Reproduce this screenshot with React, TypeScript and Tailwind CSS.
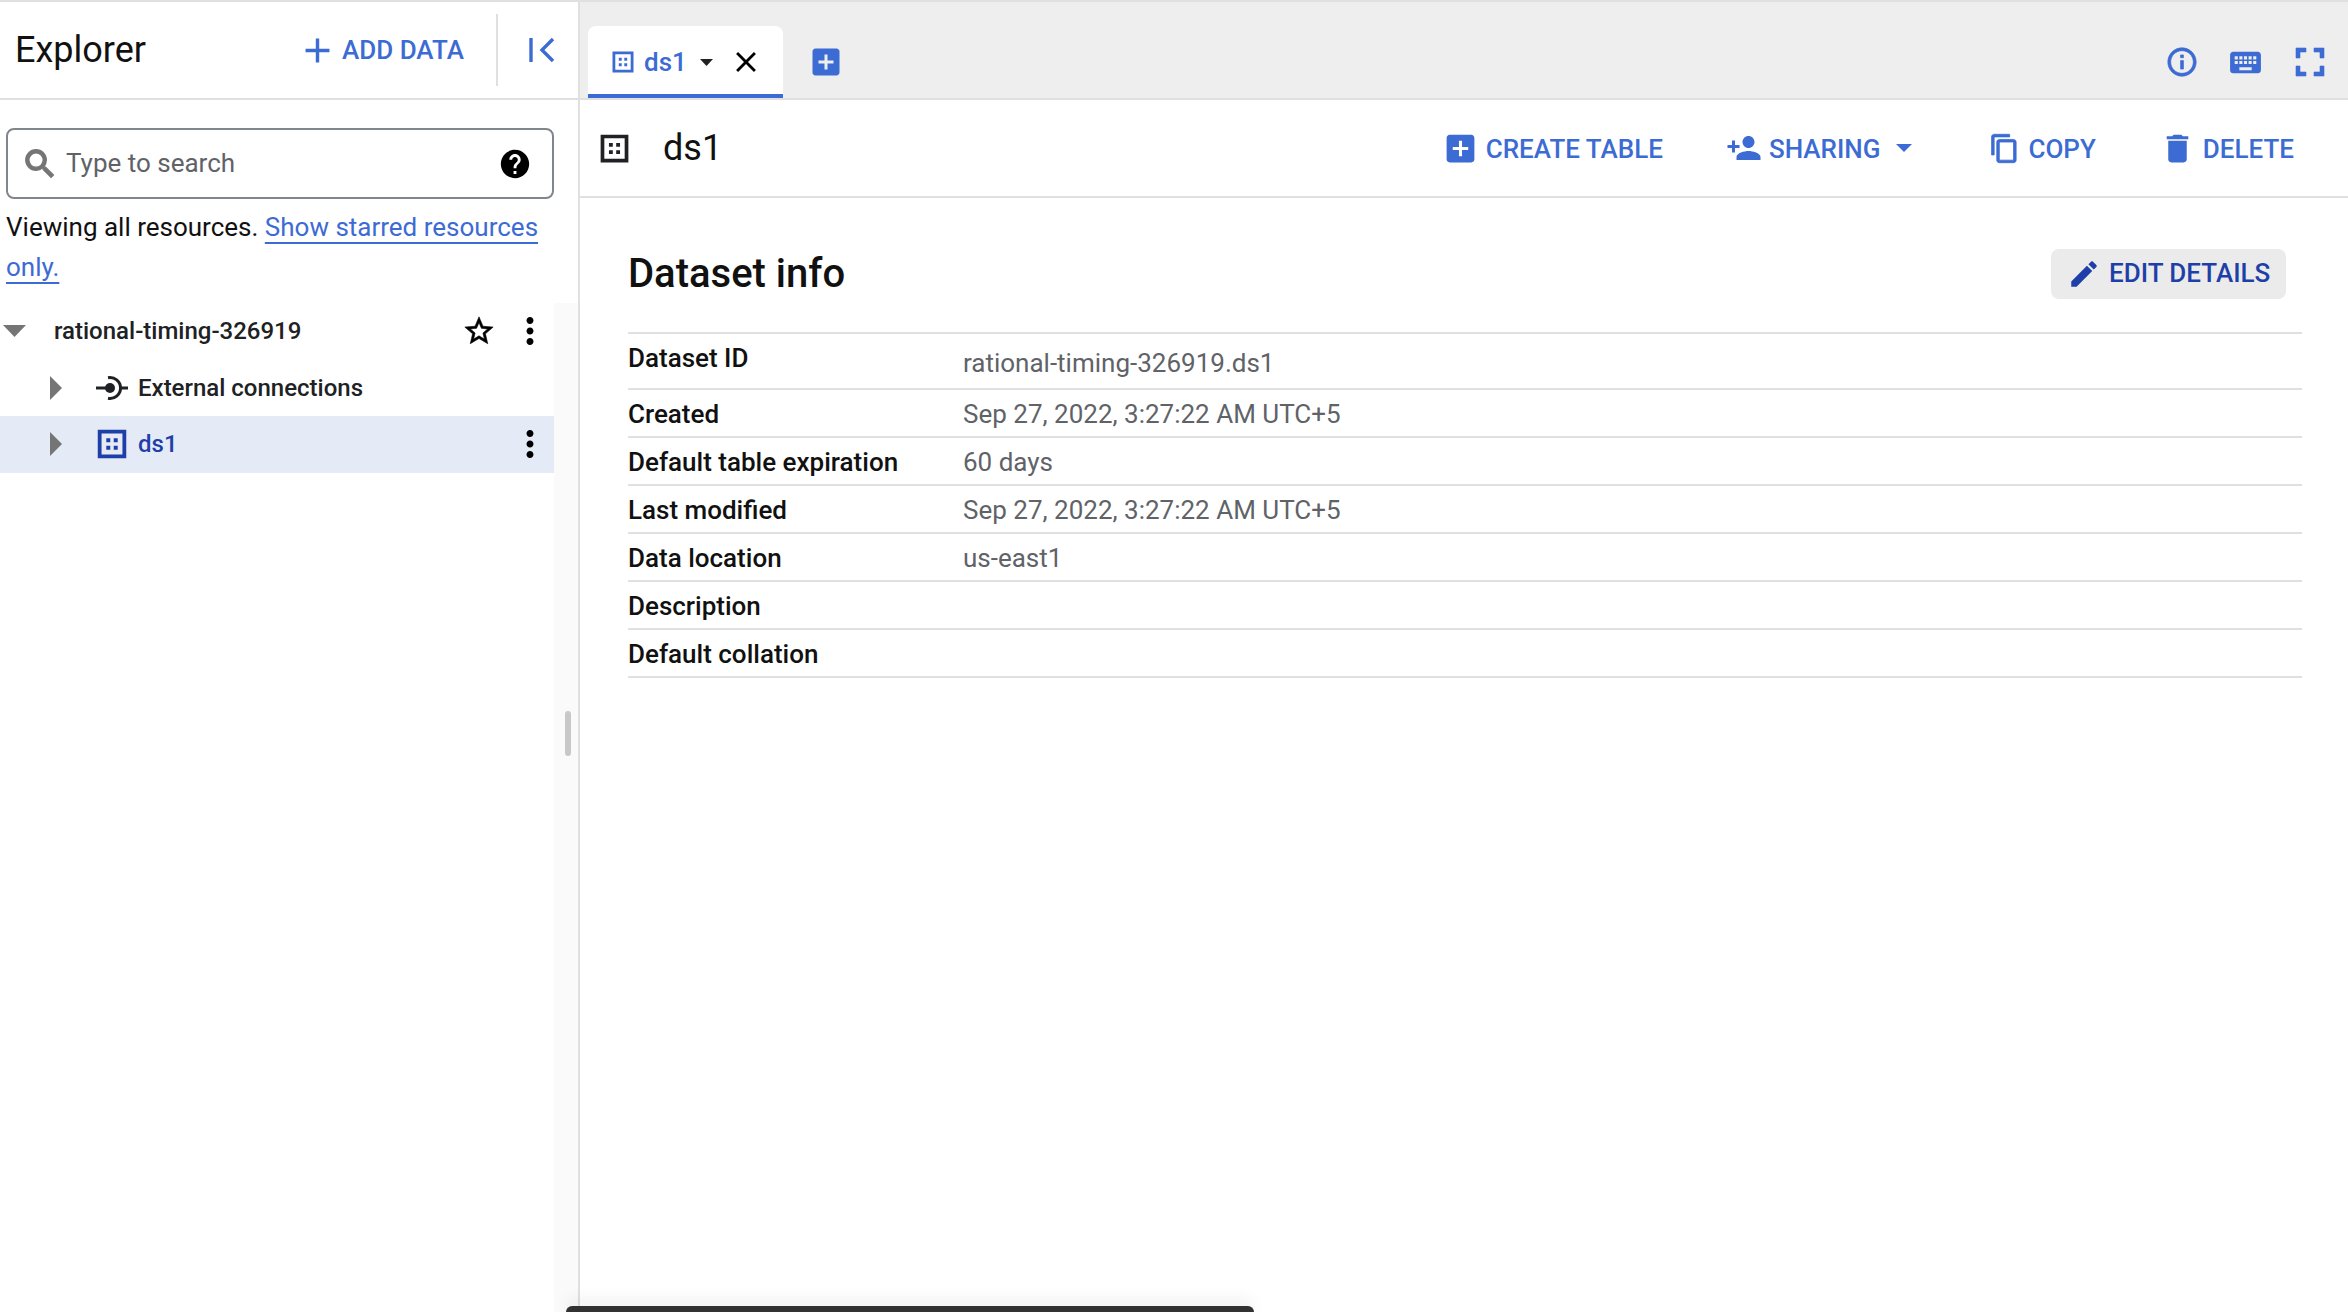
import React from 'react';

const paths = {
  add: 'M19 13h-6v6h-2v-6H5v-2h6V5h2v6h6v2z',
  search: 'M15.5 14h-.79l-.28-.27C15.41 12.59 16 11.11 16 9.5 16 5.91 13.09 3 9.5 3S3 5.91 3 9.5 5.91 16 9.5 16c1.61 0 3.09-.59 4.23-1.57l.27.28v.79l5 4.99L20.49 19l-4.99-5zm-6 0C7.01 14 5 11.99 5 9.5S7.01 5 9.5 5 14 7.01 14 9.5 11.99 14 9.5 14z',
  help: 'M12 2C6.48 2 2 6.48 2 12s4.48 10 10 10 10-4.48 10-10S17.52 2 12 2zm1 17h-2v-2h2v2zm2.07-7.75l-.9.92C13.45 12.9 13 13.5 13 15h-2v-.5c0-1.1.45-2.1 1.17-2.83l1.24-1.26c.37-.36.59-.86.59-1.41 0-1.1-.9-2-2-2s-2 .9-2 2H8c0-2.21 1.79-4 4-4s4 1.79 4 4c0 .88-.36 1.68-.93 2.25z',
  star: 'M22 9.24l-7.19-.62L12 2 9.19 8.63 2 9.24l5.46 4.73L5.82 21 12 17.27 18.18 21l-1.63-7.03L22 9.24zM12 15.4l-3.76 2.27 1-4.28-3.32-2.88 4.38-.38L12 6.1l1.71 4.04 4.38.38-3.32 2.88 1 4.28L12 15.4z',
  more: 'M12 8c1.1 0 2-.9 2-2s-.9-2-2-2-2 .9-2 2 .9 2 2 2zm0 2c-1.1 0-2 .9-2 2s.9 2 2 2 2-.9 2-2-.9-2-2-2zm0 6c-1.1 0-2 .9-2 2s.9 2 2 2 2-.9 2-2-.9-2-2-2z',
  close: 'M19 6.41L17.59 5 12 10.59 6.41 5 5 6.41 10.59 12 5 17.59 6.41 19 12 13.41 17.59 19 19 17.59 13.41 12z',
  addBox: 'M19 3H5c-1.11 0-2 .9-2 2v14c0 1.1.89 2 2 2h14c1.1 0 2-.9 2-2V5c0-1.1-.9-2-2-2zm-2 10h-4v4h-2v-4H7v-2h4V7h2v4h4v2z',
  info: 'M11 7h2v2h-2zm0 4h2v6h-2zm1-9C6.48 2 2 6.48 2 12s4.48 10 10 10 10-4.48 10-10S17.52 2 12 2zm0 18c-4.41 0-8-3.59-8-8s3.59-8 8-8 8 3.59 8 8-3.59 8-8 8z',
  keyboard: 'M20 5H4c-1.1 0-1.99.9-1.99 2L2 17c0 1.1.9 2 2 2h16c1.1 0 2-.9 2-2V7c0-1.1-.9-2-2-2zm-9 3h2v2h-2V8zm0 3h2v2h-2v-2zM8 8h2v2H8V8zm0 3h2v2H8v-2zm-1 2H5v-2h2v2zm0-3H5V8h2v2zm9 7H8v-2h8v2zm0-4h-2v-2h2v2zm0-3h-2V8h2v2zm3 3h-2v-2h2v2zm0-3h-2V8h2v2z',
  fullscreen: 'M7 14H5v5h5v-2H7v-3zm-2-4h2V7h3V5H5v5zm12 7h-3v2h5v-5h-2v3zM14 5v2h3v3h2V5h-5z',
  personAdd: 'M15 12c2.21 0 4-1.79 4-4s-1.79-4-4-4-4 1.79-4 4 1.79 4 4 4zm-9-2V7H4v3H1v2h3v3h2v-3h3v-2H6zm9 4c-2.67 0-8 1.34-8 4v2h16v-2c0-2.66-5.33-4-8-4z',
  copy: 'M16 1H4c-1.1 0-2 .9-2 2v14h2V3h12V1zm3 4H8c-1.1 0-2 .9-2 2v14c0 1.1.9 2 2 2h11c1.1 0 2-.9 2-2V7c0-1.1-.9-2-2-2zm0 16H8V7h11v14z',
  trash: 'M6 19c0 1.1.9 2 2 2h8c1.1 0 2-.9 2-2V7H6v12zM19 4h-3.5l-1-1h-5l-1 1H5v2h14V4z',
  edit: 'M3 17.25V21h3.75L17.81 9.94l-3.75-3.75L3 17.25zM20.71 7.04c.39-.39.39-1.02 0-1.41l-2.34-2.34c-.39-.39-1.02-.39-1.41 0l-1.83 1.83 3.75 3.75 1.83-1.83z',
  dataset: 'M3 3h18v18H3V3zm2.4 2.4v13.2h13.2V5.4H5.4zm3 3h2.5v2.5H8.4V8.4zm4.7 0h2.5v2.5h-2.5V8.4zm-4.7 4.7h2.5v2.5H8.4v-2.5zm4.7 0h2.5v2.5h-2.5v-2.5z',
};

const Icon = ({ d, className }: { d: string; className: string }) => (
  <svg viewBox="0 0 24 24" fill="currentColor" className={`shrink-0 ${className}`}>
    <path d={d} fillRule="evenodd" />
  </svg>
);

const Caret = ({ className }: { className: string }) => (
  <svg viewBox="0 0 10 10" fill="currentColor" preserveAspectRatio="none" className={`shrink-0 ${className}`}>
    <path d="M0 0h10L5 10z" />
  </svg>
);

const Arrow = () => (
  <svg viewBox="0 0 10 10" fill="currentColor" preserveAspectRatio="none" className="h-[24px] w-[12px] shrink-0 text-[#757575]">
    <path d="M0 0l10 5-10 5z" />
  </svg>
);

const details = [
  { label: 'Dataset ID', value: 'rational-timing-326919.ds1', h: 'h-[56px]', labelClass: 'pb-[7px]', valueClass: 'pt-[3px]' },
  { label: 'Created', value: 'Sep 27, 2022, 3:27:22 AM UTC+5', h: 'h-[48px]' },
  { label: 'Default table expiration', value: '60 days', h: 'h-[48px]' },
  { label: 'Last modified', value: 'Sep 27, 2022, 3:27:22 AM UTC+5', h: 'h-[48px]' },
  { label: 'Data location', value: 'us-east1', h: 'h-[48px]' },
  { label: 'Description', value: '', h: 'h-[48px]' },
  { label: 'Default collation', value: '', h: 'h-[48px]' },
];

const ToolbarButton = ({ d, label, iconClass, textClass, children }: { d: string; label: string; iconClass: string; textClass: string; children?: React.ReactNode }) => (
  <button className="flex items-center text-[26px] font-medium text-[#3d6bd4]">
    <Icon d={d} className={iconClass} />
    <span className={`pt-[2px] ${textClass}`}>{label}</span>
    {children}
  </button>
);

export default function App() {
  return (
    <div className="relative flex h-[1312px] w-[2348px] overflow-hidden border-t-2 border-[#e0e0e0] bg-white font-[Roboto,sans-serif] text-[#202124]">
      {/* Explorer */}
      <aside className="flex w-[580px] shrink-0 flex-col border-r-2 border-[#e0e0e0]">
        <div className="flex h-[98px] shrink-0 items-center border-b-2 border-[#e0e0e0]">
          <h2 className="ml-[15px] text-[36px] text-[#111]">Explorer</h2>
          <button className="ml-[151px] flex items-center text-[26px] font-medium text-[#3d6bd4]">
            <Icon d={paths.add} className="h-[41px] w-[41px]" />
            <span className="ml-[4px]">ADD DATA</span>
          </button>
          <div className="ml-[32px] h-[72px] w-[2px] bg-[#e0e0e0]" />
          <svg viewBox="0 0 26 26" fill="none" stroke="currentColor" strokeWidth="3.4" className="ml-[31px] h-[26px] w-[26px] text-[#3d6bd4]">
            <path d="M2 1v24" />
            <path d="M24 2L13 13l11 11" />
          </svg>
        </div>

        <div className="ml-[6px] mt-[28px] flex h-[71px] w-[548px] shrink-0 items-center rounded-lg border-2 border-[#80868b] pl-[13px] pr-[20px]">
          <Icon d={paths.search} className="h-[38px] w-[38px] stroke-current stroke-[0.8] text-[#757575]" />
          <span className="ml-[7px] flex-1 text-[26px] text-[#5f6368]">Type to search</span>
          <Icon d={paths.help} className="h-[34px] w-[34px] text-black" />
        </div>

        <p className="mt-[8px] w-[547px] pl-[6px] text-[26px] leading-[40px] text-[#111]">
          Viewing all resources.{' '}
          <a className="text-[#3d6bd4] underline decoration-2 underline-offset-[6px]">Show starred resources</a>{' '}
          <a className="text-[#3d6bd4] underline decoration-2 underline-offset-[6px]">only.</a>
        </p>

        <div className="mt-[16px] flex min-h-0 flex-1">
          <div className="w-[554px]">
            <div className="flex h-[56px] items-center">
              <Caret className="ml-[3px] h-[12px] w-[23px] text-[#757575]" />
              <span className="ml-[28px] flex-1 text-[24px] font-medium text-[#202124]">rational-timing-326919</span>
              <Icon d={paths.star} className="h-[34px] w-[34px] stroke-current stroke-[0.4] text-black" />
              <Icon d={paths.more} className="ml-[13px] mr-[3px] h-[42px] w-[42px] text-black" />
            </div>
            <div className="flex h-[57px] items-center pl-[50px]">
              <Arrow />
              <svg viewBox="0 0 32 28" fill="none" stroke="currentColor" strokeWidth="3" className="ml-[34px] h-[28px] w-[32px] text-[#202124]">
                <path d="M0 14h12M24.5 14H32" />
                <circle cx="14" cy="14" r="5" fill="currentColor" stroke="none" />
                <path d="M12 3.7A10.5 10.5 0 1 1 12 24.3" />
              </svg>
              <span className="ml-[10px] text-[24px] font-medium">External connections</span>
            </div>
            <div className="flex h-[57px] items-center bg-[#e4eaf6] pb-[2px] pl-[50px]">
              <Arrow />
              <Icon d={paths.dataset} className="ml-[31px] h-[38px] w-[38px] text-[#1f3fa8]" />
              <span className="ml-[7px] flex-1 text-[24px] font-medium text-[#1f3fa8]">ds1</span>
              <Icon d={paths.more} className="mr-[3px] h-[42px] w-[42px] text-black" />
            </div>
          </div>
          <div className="flex-1 bg-[#fafafa] pl-[11px] pt-[408px]">
            <div className="h-[45px] w-[6px] rounded-full bg-[#c8c8c8]" />
          </div>
        </div>
      </aside>

      {/* Main panel */}
      <main className="flex min-w-0 flex-1 flex-col">
        <div className="flex h-[98px] shrink-0 items-end border-b-2 border-[#e0e0e0] bg-[#eeeeee] pl-[8px] pr-[14px]">
          <div className="flex h-[72px] w-[195px] items-center rounded-t-lg border-b-4 border-[#3d6bd4] bg-white pl-[21px] pt-[4px] text-[#3d6bd4]">
            <Icon d={paths.dataset} className="h-[28px] w-[28px]" />
            <span className="ml-[7px] text-[26px] font-medium">ds1</span>
            <Caret className="ml-[13px] h-[7px] w-[13px] text-[#202124]" />
            <Icon d={paths.close} className="ml-[16px] h-[34px] w-[34px] text-black" />
          </div>
          <div className="mb-[12px] ml-[25px] flex flex-1 items-center">
            <Icon d={paths.addBox} className="h-[36px] w-[36px] text-[#3d6bd4]" />
            <div className="ml-auto flex items-center text-[#3d6bd4]">
              <Icon d={paths.info} className="h-[34px] w-[34px] stroke-current stroke-[0.5]" />
              <Icon d={paths.keyboard} className="ml-[28px] h-[37px] w-[37px]" />
              <Icon d={paths.fullscreen} className="ml-[22px] h-[48px] w-[48px] stroke-current stroke-[0.3]" />
            </div>
          </div>
        </div>

        <div className="flex h-[98px] shrink-0 items-center border-b-2 border-[#e0e0e0] pl-[16px] pr-[54px]">
          <Icon d={paths.dataset} className="h-[37px] w-[37px] text-[#202124]" />
          <span className="ml-[30px] flex-1 text-[36px] text-[#111]">ds1</span>
          <div className="flex items-center">
            <ToolbarButton d={paths.addBox} label="CREATE TABLE" iconClass="h-[37px] w-[37px]" textClass="ml-[7px]" />
            <div className="ml-[63px]">
              <ToolbarButton d={paths.personAdd} label="SHARING" iconClass="h-[36px] w-[36px]" textClass="ml-[7px]">
                <Caret className="ml-[16px] h-[8px] w-[16px]" />
              </ToolbarButton>
            </div>
            <div className="ml-[77px]">
              <ToolbarButton d={paths.copy} label="COPY" iconClass="h-[31px] w-[31px] stroke-current stroke-[0.6]" textClass="ml-[8px]" />
            </div>
            <div className="ml-[63px]">
              <ToolbarButton d={paths.trash} label="DELETE" iconClass="h-[37px] w-[37px]" textClass="ml-[7px]" />
            </div>
          </div>
        </div>

        <div className="flex flex-col pl-[48px] pr-[46px]">
          <div className="flex h-[134px] items-center justify-between pr-[16px] pt-[17px]">
            <h1 className="text-[40px] font-medium text-[#111]">Dataset info</h1>
            <button className="flex h-[50px] w-[235px] items-center rounded-lg bg-[#ebebeb] pl-[16px] text-[26px] font-medium text-[#1f3fa8]">
              <Icon d={paths.edit} className="h-[34px] w-[34px]" />
              <span className="ml-[8px]">EDIT DETAILS</span>
            </button>
          </div>
          <div className="border-t-2 border-[#e0e0e0]">
            {details.map((row) => (
              <div key={row.label} className={`flex items-center border-b-2 border-[#e0e0e0] pt-[2px] text-[26px] ${row.h}`}>
                <span className={`w-[335px] shrink-0 font-medium text-[#111] ${row.labelClass ?? ''}`}>{row.label}</span>
                <span className={`text-[#5f6368] ${row.valueClass ?? ''}`}>{row.value}</span>
              </div>
            ))}
          </div>
        </div>
      </main>

      {/* Snackbar edge at the bottom of the window */}
      <div className="absolute bottom-0 left-[566px] h-[6px] w-[688px] rounded-t-lg bg-[#323232] shadow-[0_-4px_16px_rgba(0,0,0,0.12)]" />
    </div>
  );
}
